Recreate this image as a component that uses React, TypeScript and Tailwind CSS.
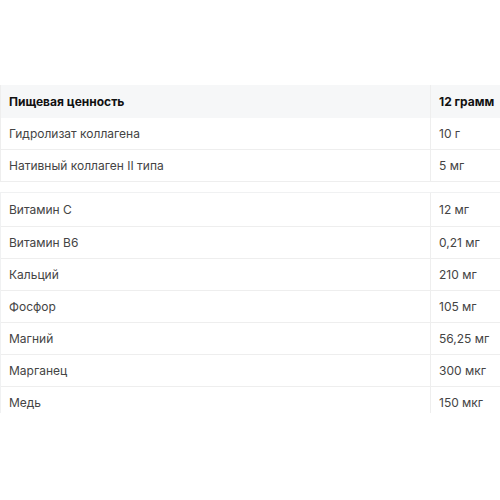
import React from "react";

const rows1 = [
  ["Гидролизат коллагена", "10 г"],
  ["Нативный коллаген II типа", "5 мг"],
];
const rows2 = [
  ["Витамин C", "12 мг"],
  ["Витамин B6", "0,21 мг"],
  ["Кальций", "210 мг"],
  ["Фосфор", "105 мг"],
  ["Магний", "56,25 мг"],
  ["Марганец", "300 мкг"],
  ["Медь", "150 мкг"],
];

function Row({ a, b, first }: { a: string; b: string; first?: boolean }) {
  return (
    <div className={`flex border-b border-[#eeeeee] ${first ? "h-[34px]" : "h-[32px]"}`}>
      <div className="w-[430px] border-r border-[#eeeeee] flex items-center pl-[8px] text-[12px] text-[#444444]">{a}</div>
      <div className="flex-1 flex items-center pl-[8px] text-[12px] text-[#444444]">{b}</div>
    </div>
  );
}

export default function App() {
  return (
    <div className="w-[500px] h-[500px] bg-white pt-[85px]" style={{ fontFamily: "Inter, 'Noto Sans', sans-serif" }}>
      <div className="border-l border-[#eeeeee]">
        <div className="flex h-[33px] bg-[#f6f7f8]">
          <div className="w-[430px] border-r border-[#eeeeee] flex items-center pl-[8px] text-[12px] font-bold text-[#111]">Пищевая ценность</div>
          <div className="flex-1 flex items-center pl-[8px] text-[12px] font-bold text-[#111]">12 грамм</div>
        </div>
        {rows1.map(([a, b]) => (
          <Row key={a} a={a} b={b} />
        ))}
      </div>
      <div className="h-[10px]" />
      <div className="h-[221px] overflow-hidden border-l border-t border-[#f0f1f2]">
        {rows2.map(([a, b], i) => (
          <Row key={a} a={a} b={b} first={i === 0} />
        ))}
      </div>
    </div>
  );
}
